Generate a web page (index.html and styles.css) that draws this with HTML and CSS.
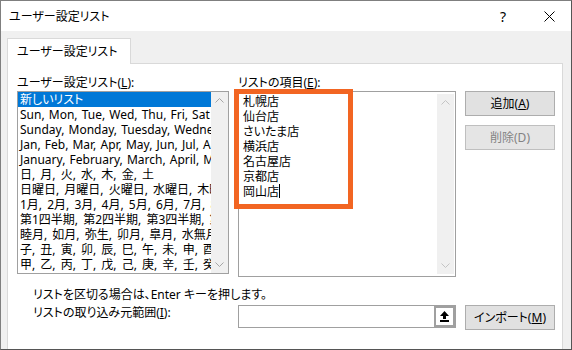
FILE: index.html
```html
<!DOCTYPE html>
<html lang="ja">
<head>
  <meta charset="UTF-8" />
  <meta name="viewport" content="width=device-width, initial-scale=1.0" />
  <title>ユーザー設定リスト</title>
  <link rel="stylesheet" href="styles.css">
</head>
<body>
  <div class="dialog">
    <div class="titlebar">
      <span class="title">ユーザー設定リスト</span>
      <span class="help">?</span>
      <span class="close">
        <svg width="11" height="11" viewBox="0 0 11 11"><path d="M0.5 0.5 L10.5 10.5 M10.5 0.5 L0.5 10.5" stroke="#000" stroke-width="1" fill="none"/></svg>
      </span>
    </div>

    <div class="dialog-body">
      <div class="tabs">
        <div class="tab">ユーザー設定リスト</div>
      </div>

      <div class="panel">
        <div class="grid">
          <div class="label">ユーザー設定リスト(<u>L</u>):</div>
          <div class="label">リストの項目(<u>E</u>):</div>
          <div></div>

          <div class="listbox">
            <ul class="rows">
              <li class="selected">新しいリスト</li>
              <li>Sun, Mon, Tue, Wed, Thu, Fri, Sat</li>
              <li>Sunday, Monday, Tuesday, Wednesday, Thursday</li>
              <li>Jan, Feb, Mar, Apr, May, Jun, Jul, Aug</li>
              <li>January, February, March, April, May</li>
              <li class="jp">日, 月, 火, 水, 木, 金, 土</li>
              <li class="jp">日曜日, 月曜日, 火曜日, 水曜日, 木曜日</li>
              <li class="jp">1月, 2月, 3月, 4月, 5月, 6月, 7月, 8月</li>
              <li class="jp">第1四半期, 第2四半期, 第3四半期, 第4四半期</li>
              <li class="jp">睦月, 如月, 弥生, 卯月, 皐月, 水無月</li>
              <li class="jp">子, 丑, 寅, 卯, 辰, 巳, 午, 未, 申, 酉, 戌</li>
              <li class="jp">甲, 乙, 丙, 丁, 戊, 己, 庚, 辛, 壬, 癸</li>
            </ul>
            <div class="scrollbar">
              <svg width="9" height="5" viewBox="0 0 9 5"><polyline points="0.5,4.5 4.5,0.5 8.5,4.5" stroke="#a6a6a6" fill="none"/></svg>
              <svg width="9" height="5" viewBox="0 0 9 5"><polyline points="0.5,0.5 4.5,4.5 8.5,0.5" stroke="#a6a6a6" fill="none"/></svg>
            </div>
          </div>

          <div class="editbox">
            <div class="entries">
              <div>札幌店</div>
              <div>仙台店</div>
              <div>さいたま店</div>
              <div>横浜店</div>
              <div>名古屋店</div>
              <div>京都店</div>
              <div>岡山店<span class="caret"></span></div>
            </div>
            <div class="scrollbar">
              <svg width="9" height="5" viewBox="0 0 9 5"><polyline points="0.5,4.5 4.5,0.5 8.5,4.5" stroke="#c4c4c4" fill="none"/></svg>
              <svg width="9" height="5" viewBox="0 0 9 5"><polyline points="0.5,0.5 4.5,4.5 8.5,0.5" stroke="#c4c4c4" fill="none"/></svg>
            </div>
            <div class="marker"></div>
          </div>

          <div class="buttons">
            <button class="btn">追加(<u>A</u>)</button>
            <button class="btn" disabled>削除(D)</button>
          </div>

          <p class="hint">リストを区切る場合は、Enter キーを押します。</p>

          <div class="label indent">リストの取り込み元範囲(<u>I</u>):</div>
          <div class="refedit">
            <span class="ref-input"></span>
            <span class="ref-button">
              <svg width="11" height="11" viewBox="0 0 11 11">
                <polygon points="5.5,0 10,5 7,5 7,8 4,8 4,5 1,5" fill="#000"/>
                <rect x="1" y="9" width="9" height="2" fill="#000"/>
              </svg>
            </span>
          </div>
          <button class="btn">インポート(<u>M</u>)</button>
        </div>
      </div>
    </div>
  </div>
</body>
</html>
```

FILE: styles.css
```css
body {
    margin: 0;
    font-family: "Noto Sans", "Noto Sans CJK JP", sans-serif;
    font-size: 12px;
    line-height: 15px;
    color: #000;
    font-feature-settings: "palt";
}
.dialog {
    width: 572px;
    height: 350px;
    box-sizing: border-box;
    border: 1px solid #7f7f7f;
    border-right-color: #555;
    border-bottom-color: #555;
    overflow: hidden;
    display: flex;
    flex-direction: column;
}
.titlebar {
    height: 30px;
    flex: none;
    background: #fff;
    display: flex;
    align-items: center;
    padding-left: 8px;
}
.title {
    flex: 1;
}
.help {
    font-size: 14px;
    width: 44px;
    text-align: left;
}
.close {
    width: 27px;
    display: flex;
}
.dialog-body {
    flex: 1;
    background: #f0f0f0;
    padding: 7px 8px 0 6px;
}
.tabs {
    display: flex;
}
.tab {
    position: relative;
    z-index: 1;
    background: #fff;
    border: 1px solid #d9d9d9;
    border-bottom: none;
    height: 25px;
    line-height: 25px;
    padding: 0 12px 0 9px;
    margin-bottom: -1px;
}
.panel {
    background: #fff;
    border: 1px solid #d9d9d9;
    border-bottom: none;
    height: 300px;
    padding: 11px 7px 0 9px;
}
.grid {
    display: grid;
    grid-template-columns: 212px 218px 90px;
    column-gap: 9px;
    align-items: start;
}
.label {
    margin-bottom: 1px;
    white-space: nowrap;
}
.indent {
    padding-left: 16px;
}
.listbox {
    height: 183px;
    box-sizing: border-box;
    border: 1px solid #a0a0a0;
    display: flex;
    overflow: hidden;
}
.rows {
    list-style: none;
    margin: 0;
    padding: 0;
    flex: 1;
    overflow: hidden;
}
.rows li {
    height: 15px;
    padding-left: 2px;
    white-space: nowrap;
    word-spacing: 1px;
}
.rows li.jp {
    word-spacing: 2px;
}
.rows li.selected {
    background: #0078d7;
    color: #fff;
}
.scrollbar {
    width: 17px;
    flex: none;
    background: #f0f0f0;
    display: flex;
    flex-direction: column;
    justify-content: space-between;
    align-items: center;
    padding: 6px 0;
    box-sizing: border-box;
}
.editbox {
    position: relative;
    height: 186px;
    box-sizing: border-box;
    border: 1px solid #a0a0a0;
    display: flex;
    padding: 2px 1px 2px 4px;
}
.entries {
    flex: 1;
}
.entries div {
    height: 15px;
}
.caret {
    display: inline-block;
    width: 1px;
    height: 14px;
    background: #000;
    vertical-align: -2px;
}
.marker {
    position: absolute;
    left: -5px;
    top: -3px;
    width: 109px;
    height: 110px;
    border: 5px solid #f26522;
}
.buttons {
    display: flex;
    flex-direction: column;
    gap: 9px;
}
.btn {
    font: inherit;
    font-feature-settings: "palt";
    height: 25px;
    width: 90px;
    background: #e1e1e1;
    border: 1px solid #adadad;
    color: #000;
    padding: 0;
}
.btn:disabled {
    color: #838383;
    background: #e5e5e5;
    border-color: #bfbfbf;
}
.hint {
    grid-column: 1 / 4;
    margin: 10px 0 3px;
    padding-left: 16px;
}
.refedit {
    height: 23px;
    box-sizing: border-box;
    border: 1px solid #a0a0a0;
    display: flex;
}
.ref-input {
    flex: 1;
}
.ref-button {
    width: 21px;
    box-sizing: border-box;
    border: 2px solid #a0a0a0;
    background: #fff;
    display: flex;
    align-items: center;
    justify-content: center;
}
```
